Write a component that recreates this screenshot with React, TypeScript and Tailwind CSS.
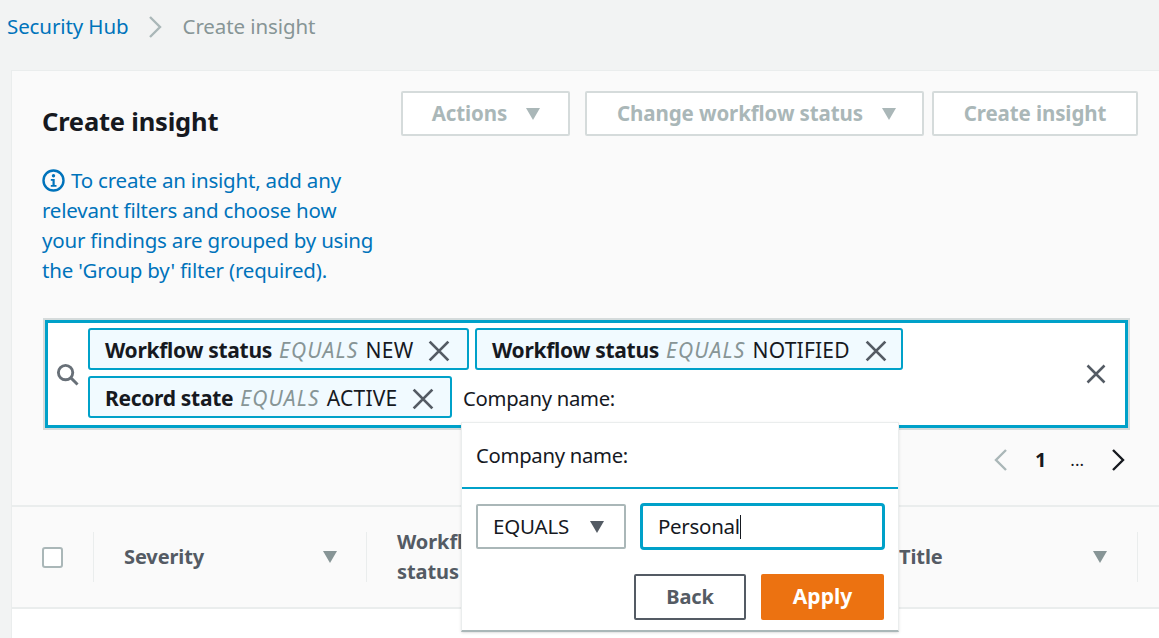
const font = "font-['Noto_Sans','Liberation_Sans',sans-serif]";

function Caret({ className }: { className: string }) {
  return (
    <svg className={className} width="16" height="14" viewBox="0 0 16 14">
      <path d="M1 1h14L8 13z" fill="currentColor" />
    </svg>
  );
}

function Cross({ size = 20 }: { size?: number }) {
  return (
    <svg width={size} height={size} viewBox="0 0 20 20" fill="none" className="shrink-0 text-[#545b64]">
      <path d="M1.5 1.5l17 17M18.5 1.5l-17 17" stroke="currentColor" strokeWidth="2.5" />
    </svg>
  );
}

function Chip({ name, value, width }: { name: string; value: string; width: string }) {
  return (
    <div className={`flex h-[42px] items-center rounded-[3px] border-2 border-[#00a1c9] bg-[#f1faff] pl-[15px] pt-[4px] text-[21px] tracking-[-0.3px] text-[#16191f] ${width}`}>
      <span className="font-bold">{name}</span>
      <span className="ml-[7px] italic tracking-[1.2px] text-[#879596]">EQUALS</span>
      <span className="ml-[7px] tracking-[0.2px]">{value}</span>
      <span className="ml-[15px]">
        <Cross size={22} />
      </span>
    </div>
  );
}

function HeaderButton({ label, caret, width }: { label: string; caret?: boolean; width: string }) {
  return (
    <div className={`flex h-[45px] items-center justify-center gap-[18px] rounded-[2px] border-2 border-[#d5dbdb] bg-white text-[20.5px] font-bold tracking-[-0.1px] text-[#aab7b8] ${width}`}>
      <span>{label}</span>
      {caret && <Caret className="text-[#aab7b8]" />}
    </div>
  );
}

function Popover() {
  return (
    <div className="absolute left-[449px] top-[351px] z-10 h-[210px] w-[438px] border border-[#eaeded] border-b-2 border-b-[#aab7b8] bg-white shadow-sm">
      <div className="flex h-[66px] items-center border-b-2 border-[#00a1c9] pl-[14px] text-[20.3px] tracking-[-0.3px] text-[#16191f]">
        Company name:
      </div>
      <div className="flex gap-[14px] pl-[14px] pt-[14px]">
        <div className="mt-px flex h-[45px] w-[150px] items-center justify-between rounded-[2px] border-2 border-[#aab7b8] bg-white pl-[15px] pr-[19px] text-[20.5px] tracking-[-0.2px] text-[#16191f]">
          <span>EQUALS</span>
          <Caret className="text-[#545b64]" />
        </div>
        <div className="flex h-[47px] w-[245px] items-center rounded-[4px] border-[3px] border-[#00a1c9] pl-[15px] text-[20.5px] tracking-[-0.3px] text-[#16191f]">
          Personal
          <span className="h-[24px] w-px bg-[#16191f]" />
        </div>
      </div>
      <div className="mt-[24px] flex justify-end gap-[15px] pr-[14px]">
        <div className="flex h-[46px] w-[112px] items-center justify-center rounded-[2px] border-2 border-[#545b64] bg-white text-[20px] font-bold tracking-[-0.1px] text-[#545b64]">
          Back
        </div>
        <div className="flex h-[46px] w-[123px] items-center justify-center rounded-[2px] bg-[#ec7211] text-[21px] font-bold text-white">
          Apply
        </div>
      </div>
    </div>
  );
}

export default function App() {
  return (
    <div className={`h-[638px] w-[1159px] overflow-hidden bg-[#f2f3f3] ${font}`}>
      {/* Breadcrumb */}
      <div className="flex h-[70px] items-start pl-[7px] pt-[11px] text-[20.5px] tracking-[-0.1px]">
        <span className="text-[#0073bb]">Security Hub</span>
        <svg className="ml-[19px] mt-[5px]" width="14" height="22" viewBox="0 0 14 22" fill="none">
          <path d="M2 1l10 10L2 21" stroke="#aab7b8" strokeWidth="2.4" />
        </svg>
        <span className="ml-[21px] text-[#879596]">Create insight</span>
      </div>

      {/* Panel */}
      <div className="relative ml-[11px] h-[568px] border-l border-t border-[#eaeded] bg-[#fafafa]">
        <div className="flex h-[247px] justify-between pl-[30px] pr-[21px] pt-[20px]">
          <div>
            <h1 className="mt-[15px] text-[25.5px] font-bold leading-[30px] tracking-[-0.2px] text-[#16191f]">Create insight</h1>
            <p className="mt-[29px] w-[340px] text-[20.5px] leading-[30px] tracking-[-0.2px] text-[#0073bb]">
              <svg className="mr-[6px] inline-block align-[-4px]" width="23" height="23" viewBox="0 0 23 23" fill="none">
                <circle cx="11.5" cy="11.5" r="10" stroke="#0073bb" strokeWidth="2.4" />
                <circle cx="11.5" cy="6.8" r="1.7" fill="#0073bb" />
                <path d="M8.8 10h3.9v6h1.8v1.8H8.8V16h1.7v-4.2H8.8z" fill="#0073bb" />
              </svg>
              To create an insight, add any relevant filters and choose how your findings are grouped by using the 'Group by' filter (required).
            </p>
          </div>
          <div className="flex items-start">
            <HeaderButton label="Actions" caret width="w-[169px] pl-[2px]" />
            <div className="ml-[15px]">
              <HeaderButton label="Change workflow status" caret width="w-[339px] pl-[5px]" />
            </div>
            <div className="ml-[8px]">
              <HeaderButton label="Create insight" width="w-[206px]" />
            </div>
          </div>
        </div>

        {/* Filter bar */}
        <div className="ml-[31px] h-[112px] w-[1087px] border-2 border-[#d5dbdb]">
          <div className="flex h-full items-center border-[3px] border-[#00a1c9] bg-white pl-[8px] pr-[19px]">
            <svg className="shrink-0" width="23" height="23" viewBox="0 0 24 24" fill="none">
              <circle cx="10" cy="10" r="7.5" stroke="#687078" strokeWidth="3" />
              <path d="M15 15l7.5 7.5" stroke="#687078" strokeWidth="3" />
            </svg>
            <div className="mb-[2px] ml-[9px] flex flex-1 flex-wrap gap-x-[6px] gap-y-[6px]">
              <Chip name="Workflow status" value="NEW" width="w-[381px]" />
              <Chip name="Workflow status" value="NOTIFIED" width="w-[428px]" />
              <Chip name="Record state" value="ACTIVE" width="w-[364px]" />
              <div className="ml-[5px] flex h-[42px] items-center pt-[3px] text-[20.3px] tracking-[-0.3px] text-[#16191f]">Company name:</div>
            </div>
            <Cross />
          </div>
        </div>

        {/* Pagination */}
        <div className="flex h-[75px] items-start justify-end pr-[33px] pt-[15px] text-[#16191f]">
          <svg className="mt-[3px]" width="16" height="24" viewBox="0 0 16 24" fill="none">
            <path d="M13 2L3 12l10 10" stroke="#aab7b8" strokeWidth="2.4" />
          </svg>
          <span className="ml-[26px] text-[20px] font-bold leading-[30px]">1</span>
          <span className="ml-[24px] text-[17px] leading-[30px]">...</span>
          <svg className="ml-[26px] mt-[3px]" width="16" height="24" viewBox="0 0 16 24" fill="none">
            <path d="M3 2l10 10L3 22" stroke="#16191f" strokeWidth="2.4" />
          </svg>
        </div>

        {/* Table header */}
        <div className="flex h-[104px] items-center border-y-2 border-[#eaeded] text-[20px] font-bold leading-[30px] tracking-[-0.1px] text-[#545b64]">
          <div className="flex h-[50px] w-[82px] items-center border-r border-[#eaeded] pl-[30px]">
            <span className="h-[21px] w-[21px] rounded-[3px] border-2 border-[#aab7b8] bg-white" />
          </div>
          <div className="flex h-[50px] w-[273px] items-center justify-between border-r border-[#eaeded] pl-[30px] pr-[28px]">
            <span>Severity</span>
            <Caret className="text-[#879596]" />
          </div>
          <div className="w-[503px] pl-[30px]">
            Workflow
            <br />
            status
          </div>
          <div className="flex h-[50px] w-[268px] items-center justify-between border-r border-[#eaeded] pl-[29px] pr-[29px]">
            <span>Title</span>
            <Caret className="text-[#879596]" />
          </div>
        </div>

        {/* Empty table body */}
        <div className="h-[40px] bg-white" />

        <Popover />
      </div>
    </div>
  );
}
